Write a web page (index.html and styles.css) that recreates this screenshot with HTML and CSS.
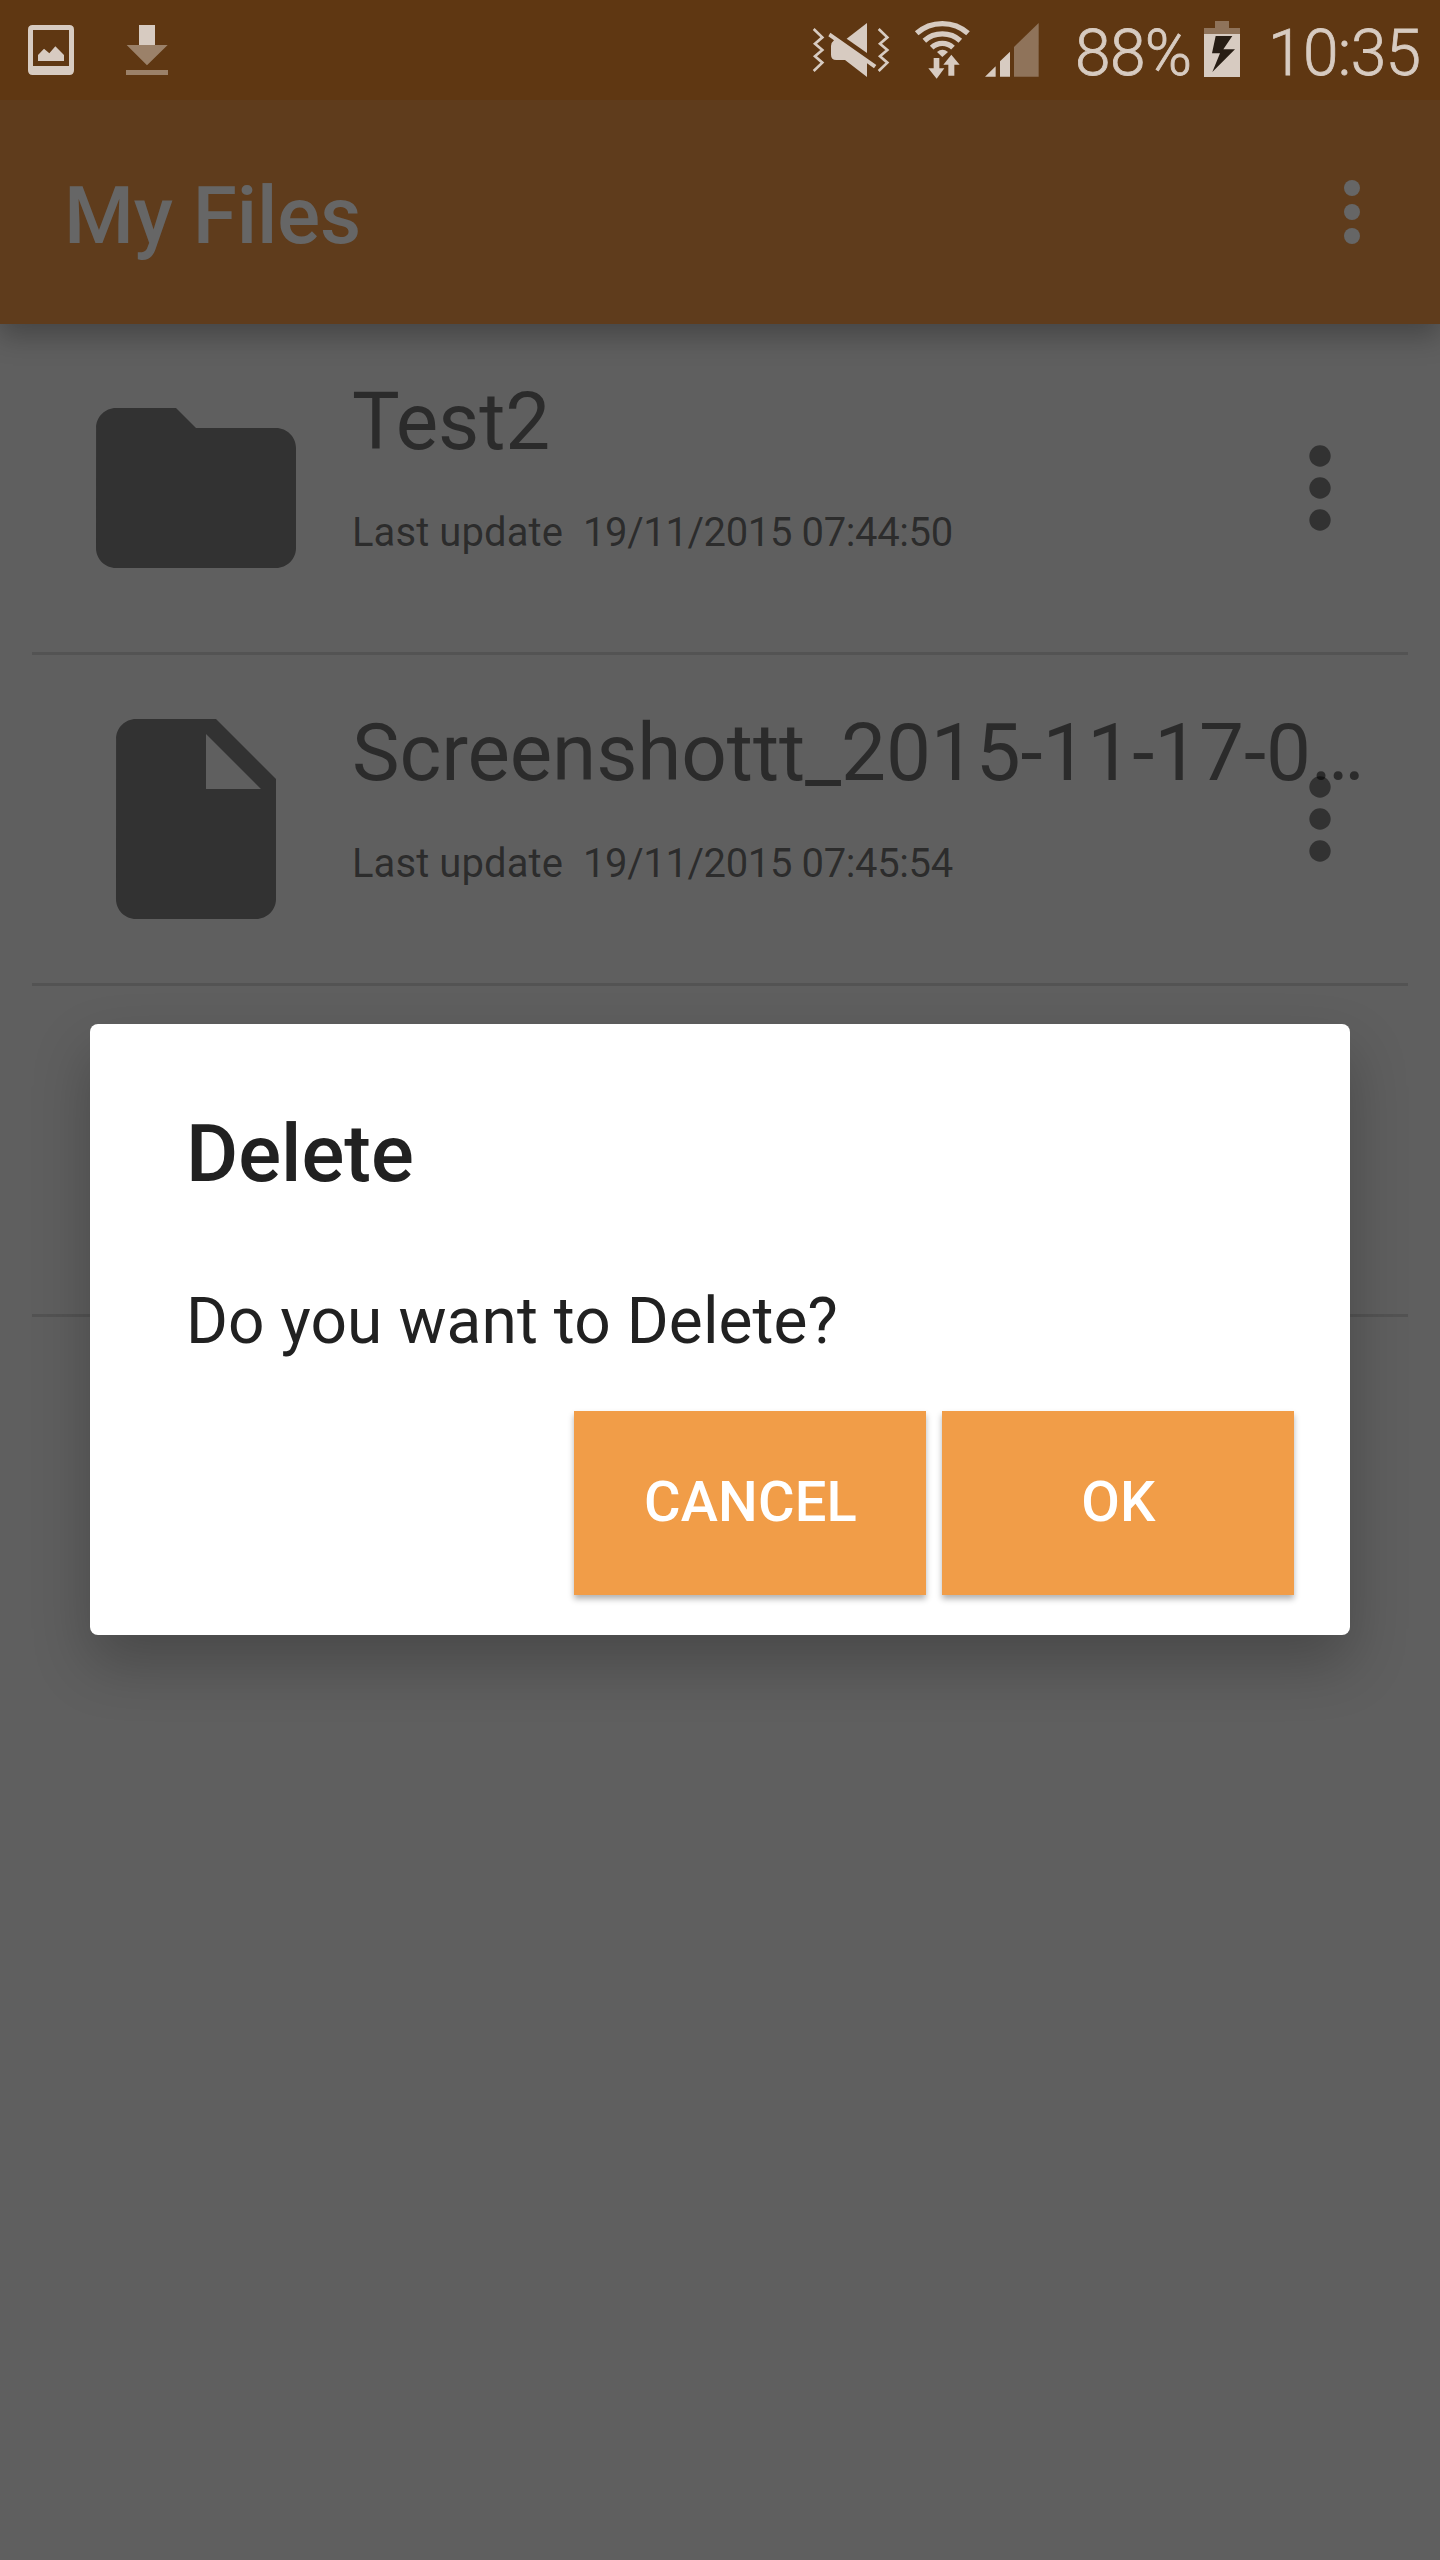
FILE: index.html
```html
<!DOCTYPE html>
<html lang="en">
<head>
<meta charset="utf-8">
<title>My Files</title>
<link rel="stylesheet" href="styles.css">
</head>
<body>
<div class="screen">
  <header class="status-bar">
    <svg class="icon-picture" viewBox="84 75 138 150" aria-hidden="true">
      <path fill-rule="evenodd" d="M98 75H208Q222 75 222 89V211Q222 225 208 225H98Q84 225 84 211V89Q84 75 98 75ZM99 90V198H207V90ZM114 183V165L132 146L148 160L166 139L192 165V183Z"/>
    </svg>
    <svg class="icon-download" viewBox="378 75 126 150" aria-hidden="true">
      <path d="M417 75H465V135H417Z"/>
      <path class="faint" d="M380 135H503L441 196ZM378 210H504V225H378Z"/>
    </svg>
    <div class="status-right">
      <svg class="icon-mute" viewBox="66 60 234 180" aria-hidden="true">
        <path class="line" d="M71 87L97 112L75 131L97 150L75 169L97 188L71 213M266 87L292 112L270 131L292 150L270 169L292 188L266 213"/>
        <path d="M231 69V159L170 116Z"/>
        <path d="M121 98L259 195L252 205L231 190V231L165 180H139Q123 180 123 164V138Q123 128 132 121L115 109Z"/>
      </svg>
      <svg class="icon-wifi" viewBox="372 57 168 186" aria-hidden="true">
        <path class="arc" d="M380 100C423 61 491 61 534 100M403 122C433 95 481 95 511 122M425 143C443 126 471 126 489 143"/>
        <path d="M441 156Q457 143 474 156L457 171Z"/>
        <path class="arrow" d="M431 174H448V205H463L440 236L415 205H431ZM475 227V194H460L484 164L509 194H493V227Z"/>
      </svg>
      <svg class="icon-signal" viewBox="582 60 168 180" aria-hidden="true">
        <path d="M617 199V230H585ZM630 230V184L660 155V230Z"/>
        <path class="faint" d="M672 230V141L746 69V230Z"/>
      </svg>
      <span class="battery-level">88%</span>
      <svg class="icon-battery" viewBox="432 60 108 180" aria-hidden="true">
        <path class="faint" d="M465 63H507V84H540V102H432V84H465Z"/>
        <path d="M432 102H540V231H432Z"/>
        <path class="bolt" d="M467 108H517L490 148H525L457 216L480 160H456Z"/>
      </svg>
      <span class="clock">10:35</span>
    </div>
  </header>

  <div class="app-bar">
    <h1 class="app-title">My Files</h1>
    <svg class="app-menu" viewBox="0 0 24 24" aria-hidden="true"><circle cx="12" cy="6" r="2"/><circle cx="12" cy="12" r="2"/><circle cx="12" cy="18" r="2"/></svg>
  </div>

  <main class="file-list">
    <div class="row">
      <svg class="file-icon" viewBox="0 0 24 24" aria-hidden="true"><path d="M10 4H4c-1.1 0-1.99.9-1.99 2L2 18c0 1.1.9 2 2 2h16c1.1 0 2-.9 2-2V8c0-1.1-.9-2-2-2h-8l-2-2z"/></svg>
      <div class="file-text">
        <div class="file-name">Test2</div>
        <div class="file-date">Last update&nbsp; <span class="stamp">19/11/2015 07:44:50</span></div>
      </div>
      <svg class="row-menu" viewBox="0 0 24 24" aria-hidden="true"><circle cx="12" cy="6" r="2"/><circle cx="12" cy="12" r="2"/><circle cx="12" cy="18" r="2"/></svg>
    </div>
    <div class="row">
      <svg class="file-icon" viewBox="0 0 24 24" aria-hidden="true"><path d="M6 2c-1.1 0-1.99.9-1.99 2L4 20c0 1.1.89 2 1.99 2H18c1.1 0 2-.9 2-2V8l-6-6H6zm7 7V3.5L18.5 9H13z"/></svg>
      <div class="file-text">
        <div class="file-name">Screenshottt_2015-11-17-0…</div>
        <div class="file-date">Last update&nbsp; <span class="stamp">19/11/2015 07:45:54</span></div>
      </div>
      <svg class="row-menu" viewBox="0 0 24 24" aria-hidden="true"><circle cx="12" cy="6" r="2"/><circle cx="12" cy="12" r="2"/><circle cx="12" cy="18" r="2"/></svg>
    </div>
    <div class="row"></div>
  </main>

  <div class="dialog" role="dialog">
    <h2 class="dialog-title">Delete</h2>
    <p class="dialog-message">Do you want to Delete?</p>
    <div class="dialog-actions">
      <button class="btn">CANCEL</button>
      <button class="btn">OK</button>
    </div>
  </div>
</div>
</body>
</html>
```
FILE: styles.css
```css
* { box-sizing: border-box; }

body {
  margin: 0;
  font-family: Roboto, "Liberation Sans", sans-serif;
}

.screen {
  position: relative;
  width: 1440px;
  height: 2560px;
  overflow: hidden;
  display: flex;
  flex-direction: column;
  background: #5f5f5f;
}

/* status bar */
.status-bar {
  position: relative;
  z-index: 1;
  height: 100px;
  flex: none;
  display: flex;
  align-items: center;
  padding: 0 20px 0 28px;
  background: #5f3712;
  color: #d7cbc1;
  fill: #d7cbc1;
}
.status-bar svg { flex: none; display: block; }
.icon-picture { width: 46px; height: 50px; }
.icon-download { width: 42px; height: 50px; margin-left: 52px; }
.faint { fill: #8f735a; }
.icon-download .faint { fill: #9b8169; }
.status-right { margin-left: 644px; display: flex; align-items: center; height: 100px; }
.icon-mute { width: 78px; height: 60px; }
.icon-mute .line { fill: none; stroke: #d7cbc1; stroke-width: 8; }
.icon-wifi { width: 56px; height: 62px; margin-left: 24px; }
.icon-wifi .arc { fill: none; stroke: #d7cbc1; stroke-width: 16; }
.icon-signal { width: 56px; height: 60px; margin-left: 14px; }
.battery-level, .clock {
  font-size: 64px;
  font-weight: 300;
  line-height: 100px;
  white-space: nowrap;
  letter-spacing: -.6px;
  padding-top: 7px;
  -webkit-text-stroke: .8px #d7cbc1;
}
.battery-level { width: 129px; margin-left: 35px; }
.icon-battery { width: 36px; height: 60px; }
.icon-battery .bolt { fill: #271d14; }
.clock { margin-left: 28px; }

/* app bar */
.app-bar {
  position: relative;
  height: 224px;
  flex: none;
  display: flex;
  align-items: center;
  justify-content: space-between;
  padding: 0 40px 0 64px;
  background: #5f3c1c;
  box-shadow: 0 12px 26px rgba(0, 0, 0, .27);
}
.app-title {
  margin: 8px 0 0;
  font-size: 80px;
  font-weight: 500;
  line-height: 94px;
  letter-spacing: -.1px;
  color: #666;
}
.app-menu { width: 96px; height: 96px; fill: #666; }

/* file list */
.file-list { display: flex; flex-direction: column; padding: 0 32px; }
.row {
  height: 331px;
  display: flex;
  align-items: center;
  padding-left: 44px;
  border-bottom: 3px solid #535353;
}
.file-icon { flex: none; width: 240px; height: 240px; fill: #323232; }
.file-text {
  flex: none;
  width: 1010px;
  height: 328px;
  margin-left: 36px;
  padding-top: 51px;
  color: rgba(0, 0, 0, .55);
  white-space: nowrap;
}
.file-name { font-size: 80px; line-height: 94px; letter-spacing: -.1px; }
.file-date { font-size: 40px; line-height: 48px; margin-top: 40px; letter-spacing: .08px; }
.stamp { letter-spacing: -.38px; }
.row-menu {
  flex: none;
  width: 128px;
  height: 128px;
  margin-left: -106px;
  fill: rgba(0, 0, 0, .474);
}

/* confirmation dialog */
.dialog {
  position: absolute;
  left: 90px;
  top: 1024px;
  width: 1260px;
  height: 611px;
  padding: 83px 56px 40px 96px;
  border-radius: 8px;
  background: #fff;
  color: #212121;
  box-shadow: 0 28px 58px rgba(0, 0, 0, .24);
}
.dialog-title { margin: 0; font-size: 80px; font-weight: 500; line-height: 94px; }
.dialog-message { margin: 83px 0 0; font-size: 64px; line-height: 75px; letter-spacing: .08px; }
.dialog-actions { display: flex; justify-content: flex-end; gap: 16px; margin-top: 52px; }
.btn {
  width: 352px;
  height: 184px;
  padding: 0 0 2px 1px;
  border: 0;
  background: #f19d48;
  color: #fff;
  font: 500 56px/66px Roboto, "Liberation Sans", sans-serif;
  letter-spacing: .2px;
  box-shadow: 0 4px 6px rgba(0, 0, 0, .3);
}
```
